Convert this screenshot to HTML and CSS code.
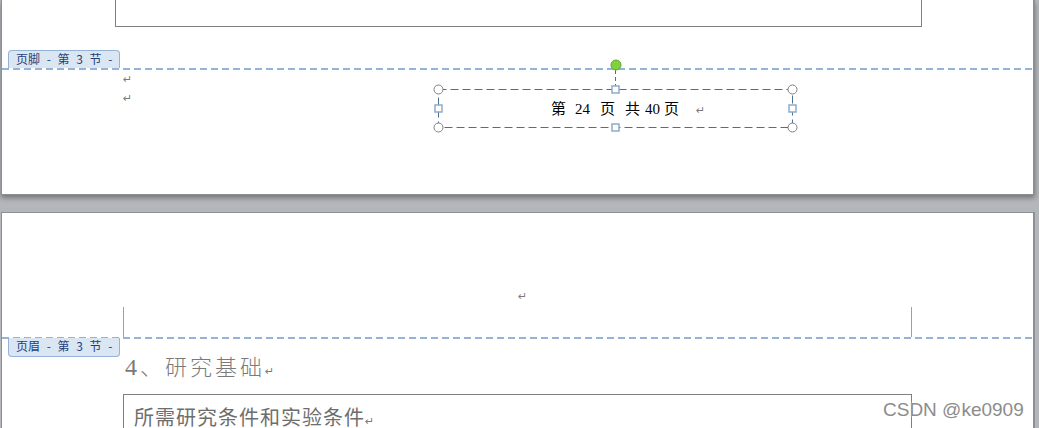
FILE: index.html
```html
<!DOCTYPE html>
<html lang="zh-CN">
<head>
    <meta charset="UTF-8">
    <meta name="viewport" content="width=device-width, initial-scale=1.0">
    <title>页脚 - 第 3 节</title>
    <link rel="stylesheet" href="styles.css">
</head>
<body>

<div class="page page-top">
    <div class="top-box"></div>
    <div class="tab tab-footer">页脚 - 第 3 节 -</div>
    <div class="sep"></div>
    <div class="para-mark mark-first">↵</div>
    <div class="para-mark">↵</div>

    <!-- floating text box in the footer -->
    <svg class="box-frame" width="372" height="80" viewBox="0 0 372 80">
        <line x1="185.5" y1="14" x2="185.5" y2="30" stroke="#4e6e8e" stroke-dasharray="4 3"/>
        <rect x="8.5" y="33.5" width="354" height="38" fill="none" stroke="#4e6e8e" stroke-dasharray="8 4"/>
        <circle cx="186" cy="9" r="5" fill="#7ed23f" stroke="#62a52f"/>
        <circle cx="8.5" cy="33.5" r="4.5" fill="#fff" stroke="#808080"/>
        <circle cx="362.5" cy="33.5" r="4.5" fill="#fff" stroke="#808080"/>
        <circle cx="8.5" cy="71.5" r="4.5" fill="#fff" stroke="#808080"/>
        <circle cx="362.5" cy="71.5" r="4.5" fill="#fff" stroke="#808080"/>
        <rect x="182" y="30" width="7" height="7" fill="#fff" stroke="#8eaacb" stroke-width="1.5"/>
        <rect x="182" y="68" width="7" height="7" fill="#fff" stroke="#8eaacb" stroke-width="1.5"/>
        <rect x="5" y="49" width="7" height="7" fill="#fff" stroke="#8eaacb" stroke-width="1.5"/>
        <rect x="359" y="49" width="7" height="7" fill="#fff" stroke="#8eaacb" stroke-width="1.5"/>
    </svg>
    <div class="box-text">
        <span class="cn">第</span><span class="num n1">24</span><span class="cn n2">页</span><span class="cn n2">共</span><span class="num n3">40</span><span class="cn n4">页</span><span class="para-mark inline-mark">↵</span>
    </div>
</div>

<div class="page page-bottom">
    <div class="para-mark center-mark">↵</div>
    <div class="corner-row"></div>
    <div class="sep"></div>
    <div class="head-row">
        <div class="tab tab-header">页眉 - 第 3 节 -</div>
        <h2 class="heading"><span class="num">4</span>、研究基础<span class="para-mark">↵</span></h2>
    </div>
    <div class="text-box">
        <p class="box-line">所需研究条件和实验条件<span class="para-mark">↵</span></p>
    </div>
</div>

<div class="watermark">CSDN @ke0909</div>

</body>
</html>
```

FILE: styles.css
```css
body {
    margin: 0;
    background-color: #b3b7bb;
    font-family: "Noto Sans CJK SC", sans-serif;
    width: 1039px;
    height: 428px;
    overflow: hidden;
    position: relative;
}
.page {
    background: white;
    margin-left: 1px;
    width: 1034px;
    border-left: 1px solid #8c9094;
    border-right: 2px solid #8c9094;
    box-sizing: border-box;
    position: relative;
}
.page-top {
    height: 195px;
    border-bottom: 1px solid #8c9094;
    box-shadow: 0 3px 5px rgba(0, 0, 0, 0.35);
    z-index: 1;
}
.page-bottom {
    margin-top: 17px;
    height: 216px;
    overflow: hidden;
    border-top: 1px solid #8c9094;
}
.top-box {
    margin-left: 113px;
    width: 807px;
    height: 27px;
    border: 1px solid #808080;
    border-top: none;
    box-sizing: border-box;
}
.tab {
    margin-left: 6px;
    width: 112px;
    height: 18px;
    box-sizing: border-box;
    background: #dbe6f3;
    border: 1px solid #95b3d7;
    color: #1f3f7a;
    font-size: 12px;
    line-height: 16px;
    padding-left: 7px;
    word-spacing: 4px;
    white-space: nowrap;
}
.tab-footer {
    margin-top: 23px;
    border-bottom: none;
    border-radius: 4px 4px 0 0;
}
.tab-header {
    margin-top: -1px;
    height: 19px;
    border-top: none;
    border-radius: 0 0 4px 4px;
    flex-shrink: 0;
}
.sep {
    height: 2px;
    background: repeating-linear-gradient(90deg, #95b3d7 0 7px, transparent 7px 11px);
}
.para-mark {
    font-family: "DejaVu Sans", sans-serif;
    font-size: 11px;
    color: #7a7a7a;
    line-height: 19px;
    font-weight: normal;
}
.page-top > .para-mark {
    margin-left: 121px;
}
.box-frame {
    position: absolute;
    left: 428px;
    top: 56px;
}
.box-text {
    position: absolute;
    left: 549px;
    top: 89px;
    height: 38px;
    line-height: 37px;
    font-size: 15px;
    color: #000;
    white-space: nowrap;
}
.box-text .num {
    font-family: "Liberation Serif", serif;
}
.box-text .n1 { margin-left: 9px; }
.box-text .n2 { margin-left: 10px; }
.box-text .n3 { margin-left: 5px; }
.box-text .n4 { margin-left: 4px; }
.box-text .inline-mark {
    margin-left: 17px;
}
.center-mark {
    margin-left: 516px;
    margin-top: 76px;
    line-height: 16px;
    height: 16px;
}
.corner-row {
    margin-top: 2px;
    margin-left: 121px;
    width: 789px;
    height: 30px;
    border-left: 1px solid #a0a0a0;
    border-right: 1px solid #a0a0a0;
    box-sizing: border-box;
}
.head-row {
    display: flex;
    align-items: flex-start;
}
.heading {
    margin: 11px 0 0 5px;
    font-size: 22px;
    line-height: 30px;
    font-weight: 300;
    color: #7a7a7a;
    letter-spacing: 3px;
    white-space: nowrap;
}
.heading .num {
    font-family: "Liberation Serif", serif;
    font-size: 24px;
}
.heading .para-mark {
    letter-spacing: 0;
}
.text-box {
    margin: 12px 0 0 121px;
    width: 789px;
    height: 60px;
    border: 1px solid #808080;
    box-sizing: border-box;
}
.box-line {
    margin: 10px 0 0 10px;
    font-size: 20px;
    line-height: 24px;
    color: #6e6e6e;
    letter-spacing: 1px;
    white-space: nowrap;
}
.box-line .para-mark {
    letter-spacing: 0;
}
.watermark {
    position: absolute;
    left: 883px;
    top: 399px;
    font-family: "Liberation Sans", sans-serif;
    font-size: 19px;
    color: #8c8c8c;
    text-shadow: 0 0 2px #fff, 0 0 1px #fff;
    z-index: 2;
}
```
